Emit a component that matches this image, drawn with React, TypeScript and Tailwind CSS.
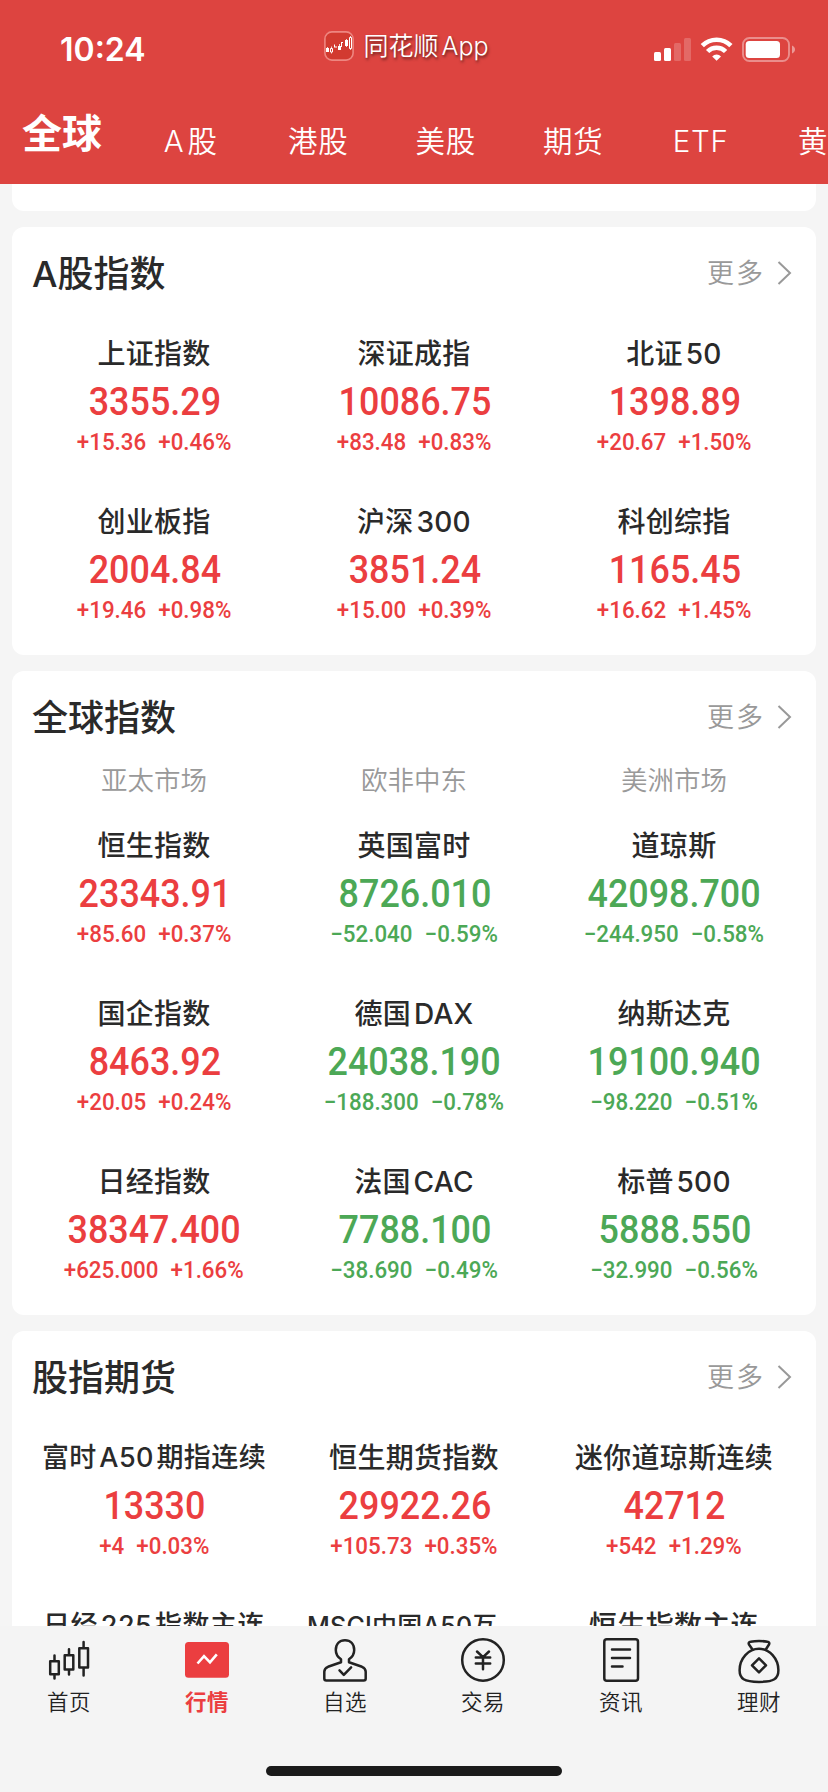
import type { ReactNode } from "react";

type Quote = {
  name: string;
  price?: string;
  change?: string;
  percent?: string;
  nameClass?: string;
};

const aShares: Quote[] = [
  { name: "上证指数", price: "3355.29", change: "+15.36", percent: "+0.46%" },
  { name: "深证成指", price: "10086.75", change: "+83.48", percent: "+0.83%" },
  { name: "北证 50", price: "1398.89", change: "+20.67", percent: "+1.50%" },
  { name: "创业板指", price: "2004.84", change: "+19.46", percent: "+0.98%" },
  { name: "沪深 300", price: "3851.24", change: "+15.00", percent: "+0.39%" },
  { name: "科创综指", price: "1165.45", change: "+16.62", percent: "+1.45%" },
];

const globalIndexes: Quote[] = [
  { name: "恒生指数", price: "23343.91", change: "+85.60", percent: "+0.37%" },
  { name: "英国富时", price: "8726.010", change: "−52.040", percent: "−0.59%" },
  { name: "道琼斯", price: "42098.700", change: "−244.950", percent: "−0.58%" },
  { name: "国企指数", price: "8463.92", change: "+20.05", percent: "+0.24%" },
  { name: "德国 DAX", price: "24038.190", change: "−188.300", percent: "−0.78%" },
  { name: "纳斯达克", price: "19100.940", change: "−98.220", percent: "−0.51%" },
  { name: "日经指数", price: "38347.400", change: "+625.000", percent: "+1.66%" },
  { name: "法国 CAC", price: "7788.100", change: "−38.690", percent: "−0.49%" },
  { name: "标普 500", price: "5888.550", change: "−32.990", percent: "−0.56%" },
];

const futures: Quote[] = [
  { name: "富时 A50 期指连续", price: "13330", change: "+4", percent: "+0.03%", nameClass: "text-[27px] tracking-[0.4px]" },
  { name: "恒生期货指数", price: "29922.26", change: "+105.73", percent: "+0.35%" },
  { name: "迷你道琼斯连续", price: "42712", change: "+542", percent: "+1.29%" },
  { name: "日经 225 指数主连", nameClass: "text-[27px] tracking-[0.5px]" },
  { name: "MSCI中国A50互...", nameClass: "text-[25px] tracking-[0.2px]" },
  { name: "恒生指数主连" },
];

const markets = ["亚太市场", "欧非中东", "美洲市场"];
const topTabs = ["A 股", "港股", "美股", "期货", "ETF", "黄金"];

function QuoteCell({ quote }: { quote: Quote }) {
  const color = quote.percent?.startsWith("+") ? "text-[#eb3e40]" : "text-[#4ca856]";

  return (
    <div className="flex h-[168px] flex-col items-center pt-[11px] whitespace-nowrap">
      <div className={`h-12 font-medium leading-[48px] [word-spacing:-5px] text-[#2a2a2a] ${quote.nameClass ?? "text-[28px] tracking-[0.3px]"}`}>
        {quote.name}
      </div>
      {quote.price && (
        <>
          <div className={`h-12 scale-x-[0.92] pl-px font-[Roboto] text-[39px] font-medium leading-[48px] ${color}`}>
            {quote.price}
          </div>
          <div className={`flex h-[34px] scale-x-[0.93] gap-[13px] font-[Roboto] text-[24px] font-medium leading-[32px] ${color}`}>
            <span>{quote.change}</span>
            <span>{quote.percent}</span>
          </div>
        </>
      )}
    </div>
  );
}

function Section(props: { title: string; quotes: Quote[]; columns?: string[] }) {
  return (
    <section className="shrink-0 rounded-xl bg-white">
      <div className="flex h-[92px] items-center justify-between pl-5 pr-[24px]">
        <h2 className="pt-[2px] text-[36px] font-medium leading-none text-[#2a2a2a]">{props.title}</h2>
        <button className="flex items-center gap-[12px] text-[27px] font-[350] leading-none tracking-[2px] text-[#999]">
          更多
          <svg className="h-[26px] w-[15px]" viewBox="0 0 15 26" fill="none" stroke="currentColor" strokeWidth={2}>
            <path d="M1.5 2 13 13 1.5 24" />
          </svg>
        </button>
      </div>
      {props.columns && (
        <div className="grid h-12 grid-cols-3 px-3 text-center text-[26.5px] font-[350] leading-[34px] text-[#999]">
          {props.columns.map((c) => (
            <span key={c}>{c}</span>
          ))}
        </div>
      )}
      <div className="grid grid-cols-3 px-3">
        {props.quotes.map((q) => (
          <QuoteCell key={q.name} quote={q} />
        ))}
      </div>
    </section>
  );
}

function StatusBar() {
  return (
    <div className="flex h-[98px] items-start justify-between pl-[60px] pr-[32px] text-white">
      <div className="mt-[30px] w-[258px] font-[Inter] text-[32px] font-semibold leading-10">10:24</div>
      <div className="mt-[28px] flex items-center gap-[10px]">
        <svg className="h-[30px] w-[30px]" viewBox="0 0 30 30" fill="none">
          <rect x="0.9" y="0.9" width="28.2" height="28.2" rx="7" fill="#d23a30" stroke="#ee8680" strokeWidth={1.6} />
          <path d="M2 17h3v4H2zM14 15h3v4h-3zM21 9h3v6h-3zM10 13.5h1v2h2v1h-3zM17 11h2v1h-1v4h-1z" fill="#fff" />
          <path d="M3.5 16v1M7.5 15.5v7M15.5 13v6M22.5 8v8M26.5 5v14" stroke="#fff" strokeWidth={0.8} />
          <path d="M6.5 17.5h2v3.5h-2zM25.5 6.5h2v11h-2z" fill="#d23a30" stroke="#fff" />
        </svg>
        <span className="text-[25px] font-[350] leading-[36px] [word-spacing:-4px] [text-shadow:1px_2px_3px_rgba(0,0,0,0.55)]">同花顺 App</span>
      </div>
      <div className="mt-[36px] flex w-[302px] items-center justify-end">
        <svg className="h-[27px] w-[142px]" viewBox="0 0 142 27" fill="none">
          <g fill="#fff">
            <rect x="0" y="16" width="7" height="9" rx="1.5" />
            <rect x="10" y="12" width="7" height="13" rx="1.5" />
            <rect x="20" y="7" width="7" height="18" rx="1.5" opacity=".2" />
            <rect x="30" y="2" width="7" height="23" rx="1.5" opacity=".2" />
            <path d="M62.600 24.800 58.200 20.400a6.200 6.200 0 0 1 8.800 0z" />
          </g>
          <path d="M48.300 9.700a20.200 20.200 0 0 1 28.600 0M53.600 15.500a12.700 12.700 0 0 1 18 0" stroke="#fff" strokeWidth={4.6} />
          <rect x="89" y="2" width="46" height="23" rx="6.500" stroke="#fff" strokeOpacity=".4" strokeWidth={1.9} />
          <rect x="91.700" y="5" width="34.300" height="17" rx="3.500" fill="#fff" />
          <path d="M138 9.500v8c4-1.500 4-6.500 0-8z" fill="#fff" opacity=".45" />
        </svg>
      </div>
    </div>
  );
}

function TopTabs() {
  return (
    <nav className="flex h-[86px] text-white">
      <div className="w-[127px] shrink-0 pl-[22px] pt-[12px] text-[40px] font-bold leading-[48px]">全球</div>
      {topTabs.map((tab) => (
        <div
          key={tab}
          className="w-[127.5px] shrink-0 pt-[22px] text-center text-[29.5px] font-[350] leading-[42px] tracking-[0.7px] [word-spacing:-6px]"
        >
          {tab}
        </div>
      ))}
    </nav>
  );
}

function NavItem(props: { label: string; active?: boolean; children: ReactNode }) {
  return (
    <div
      className={`flex w-[138px] flex-col items-center text-[21.5px] leading-[28px] tracking-[0.5px] ${
        props.active ? "font-bold text-[#eb3e40]" : "font-[350] text-[#222]"
      }`}
    >
      <svg
        className="mt-[10px] mb-[4px] h-12 w-12"
        viewBox="0 0 48 48"
        fill="none"
        stroke="currentColor"
        strokeWidth={2.5}
        strokeLinecap="round"
        strokeLinejoin="round"
      >
        {props.children}
      </svg>
      {props.label}
    </div>
  );
}

export default function App() {
  return (
    <div className="flex h-[1792px] w-[828px] flex-col overflow-hidden bg-[#f5f5f5] font-[Inter,'Noto_Sans_CJK_SC',sans-serif]">
      <header className="h-[184px] shrink-0 overflow-hidden bg-[#dd4440]">
        <StatusBar />
        <TopTabs />
      </header>

      <main className="flex h-[1442px] shrink-0 flex-col gap-4 overflow-hidden px-3">
        <div className="h-[27px] shrink-0 rounded-b-xl bg-white" />
        <Section title="A股指数" quotes={aShares} />
        <Section title="全球指数" quotes={globalIndexes} columns={markets} />
        <Section title="股指期货" quotes={futures} />
      </main>

      <footer className="flex h-[166px] shrink-0 flex-col items-center justify-between bg-[#f4f4f4] pb-4">
        <nav className="flex">
          <NavItem label="首页">
            <path d="M5.200 25.200h8.600v13H5.200zM9.500 19.5v5M9.500 38.500V42.500M19.700 19.200h8.600v14.300h-8.600zM24 13.300V19M24 34v4.500M34.300 12.200H43v19.300h-8.700zM38.600 6V12M38.600 32v7.500" />
          </NavItem>
          <NavItem label="行情" active>
            <rect x="2" y="6" width="44" height="35.700" rx="3.500" fill="currentColor" stroke="none" />
            <path d="M14.500 27.500 21 20.200l6 6.200 6.800-8" stroke="#fff" strokeWidth={2.6} strokeLinecap="butt" strokeLinejoin="miter" />
          </NavItem>
          <NavItem label="自选">
            <path d="M20 26.300v-3c-3-2-5.200-5.500-5.200-9.300 0-6 3.700-9.800 9.200-9.800s9.200 3.800 9.200 9.800c0 3.800-2.200 7.300-5.200 9.300v3l13 4.500c2.500 1 3.700 2.500 3.700 5V42.500a2 2 0 0 1-2 2H5.300a2 2 0 0 1-2-2V35.800c0-2.500 1.200-4 3.700-5z" />
            <path d="m18.500 34.300 4.300 4.500 7.300-7.500" />
          </NavItem>
          <NavItem label="交易">
            <circle cx="24" cy="24" r="20.800" />
            <path d="m18 15.500 6 5.700 6-5.700M16.800 21.400h14.400M16.800 27.400h14.400M24 21.400v11.800" />
          </NavItem>
          <NavItem label="资讯">
            <rect x="7.300" y="3.300" width="33.700" height="41.400" rx="2.500" />
            <path d="M15 13.400h18M15 22h18M15 30.600h10.500" />
          </NavItem>
          <NavItem label="理财">
            <path d="M17.500 13.500 14 8.500c-.8-1.500 0-2.500 1.500-2.700 5.500-1 11.500-1 17 0 1.500.2 2.300 1.200 1.500 2.700l-3.200 5" />
            <path d="M24 12.800c10.500 0 19.400 9.700 19.400 21.500 0 8.500-4.400 11.600-19.400 11.600S4.600 42.800 4.600 34.300C4.600 22.500 13.500 12.800 24 12.800z" />
            <path d="m24 22.300 7 7-7 7-7-7z" />
          </NavItem>
        </nav>
        <div className="h-[10px] w-[296px] rounded-full bg-[#1a1a1a]" />
      </footer>
    </div>
  );
}
